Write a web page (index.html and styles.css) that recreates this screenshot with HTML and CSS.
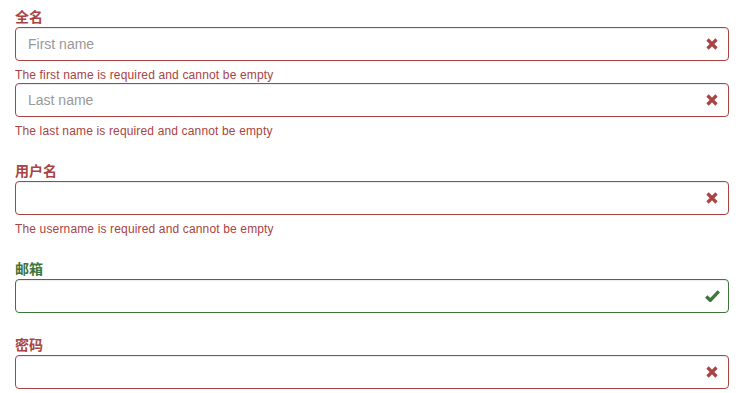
FILE: index.html
```html
<!DOCTYPE html>
<html lang="zh">
<head>
<meta charset="utf-8">
<title>Form</title>
<link rel="stylesheet" href="styles.css">
</head>
<body>
<form class="form">
  <div class="group error">
    <label class="label">全名</label>
    <div class="field">
      <input class="input" type="text" placeholder="First name">
      <svg class="icon" width="12" height="12" viewBox="0 0 12 12"><path d="M1.5 1.5 L10.5 10.5 M10.5 1.5 L1.5 10.5" stroke="#a94442" stroke-width="3.2" fill="none"/></svg>
    </div>
    <div class="help">The first name is required and cannot be empty</div>
    <div class="field">
      <input class="input" type="text" placeholder="Last name">
      <svg class="icon" width="12" height="12" viewBox="0 0 12 12"><path d="M1.5 1.5 L10.5 10.5 M10.5 1.5 L1.5 10.5" stroke="#a94442" stroke-width="3.2" fill="none"/></svg>
    </div>
    <div class="help">The last name is required and cannot be empty</div>
  </div>
  <div class="group error">
    <label class="label">用户名</label>
    <div class="field">
      <input class="input" type="text">
      <svg class="icon" width="12" height="12" viewBox="0 0 12 12"><path d="M1.5 1.5 L10.5 10.5 M10.5 1.5 L1.5 10.5" stroke="#a94442" stroke-width="3.2" fill="none"/></svg>
    </div>
    <div class="help">The username is required and cannot be empty</div>
  </div>
  <div class="group success">
    <label class="label">邮箱</label>
    <div class="field">
      <input class="input" type="text">
      <svg class="icon icon-ok" width="15" height="12" viewBox="0 0 15 12"><path d="M1.2 6.5 L5.3 10.3 L13.8 1.4" stroke="#3c763d" stroke-width="3.4" fill="none" stroke-linejoin="miter"/></svg>
    </div>
  </div>
  <div class="group error">
    <label class="label">密码</label>
    <div class="field">
      <input class="input" type="password">
      <svg class="icon" width="12" height="12" viewBox="0 0 12 12"><path d="M1.5 1.5 L10.5 10.5 M10.5 1.5 L1.5 10.5" stroke="#a94442" stroke-width="3.2" fill="none"/></svg>
    </div>
  </div>
</form>
</body>
</html>
```
FILE: styles.css
```css
html, body {
  margin: 0;
  padding: 0;
  background: #fff;
}
body {
  font-family: "Liberation Sans", Arial, "Noto Sans CJK SC", sans-serif;
  font-size: 14px;
  color: #333;
}
.form {
  padding: 7px 15px 0 15px;
}
.group {
  margin-bottom: 22px;
}
.label {
  display: block;
  font-family: "Liberation Sans", "Noto Sans CJK SC", sans-serif;
  font-weight: bold;
  font-size: 14px;
  line-height: 20px;
  height: 20px;
}
.field {
  position: relative;
}
.input {
  display: block;
  box-sizing: border-box;
  width: 100%;
  height: 34px;
  margin: 0;
  padding: 6px 12px;
  font-family: "Liberation Sans", Arial, sans-serif;
  font-size: 14px;
  line-height: 20px;
  color: #555;
  background: #fff;
  border: 1px solid #ccc;
  border-radius: 4px;
  outline: none;
  box-shadow: inset 0 1px 1px rgba(0,0,0,.075);
}
.input::placeholder {
  color: #999;
}
.icon {
  position: absolute;
  right: 11px;
  top: 11px;
}
.icon-ok {
  right: 9px;
}
.help {
  margin-top: 5px;
  padding-top: 1px;
  height: 16px;
  font-size: 12px;
  letter-spacing: 0.15px;
  line-height: 17px;
}
.error .label, .error .help { color: #a94442; }
.error .input { border-color: #a94442; }
.success .label { color: #3c763d; }
.success .input { border-color: #3c763d; }
```
